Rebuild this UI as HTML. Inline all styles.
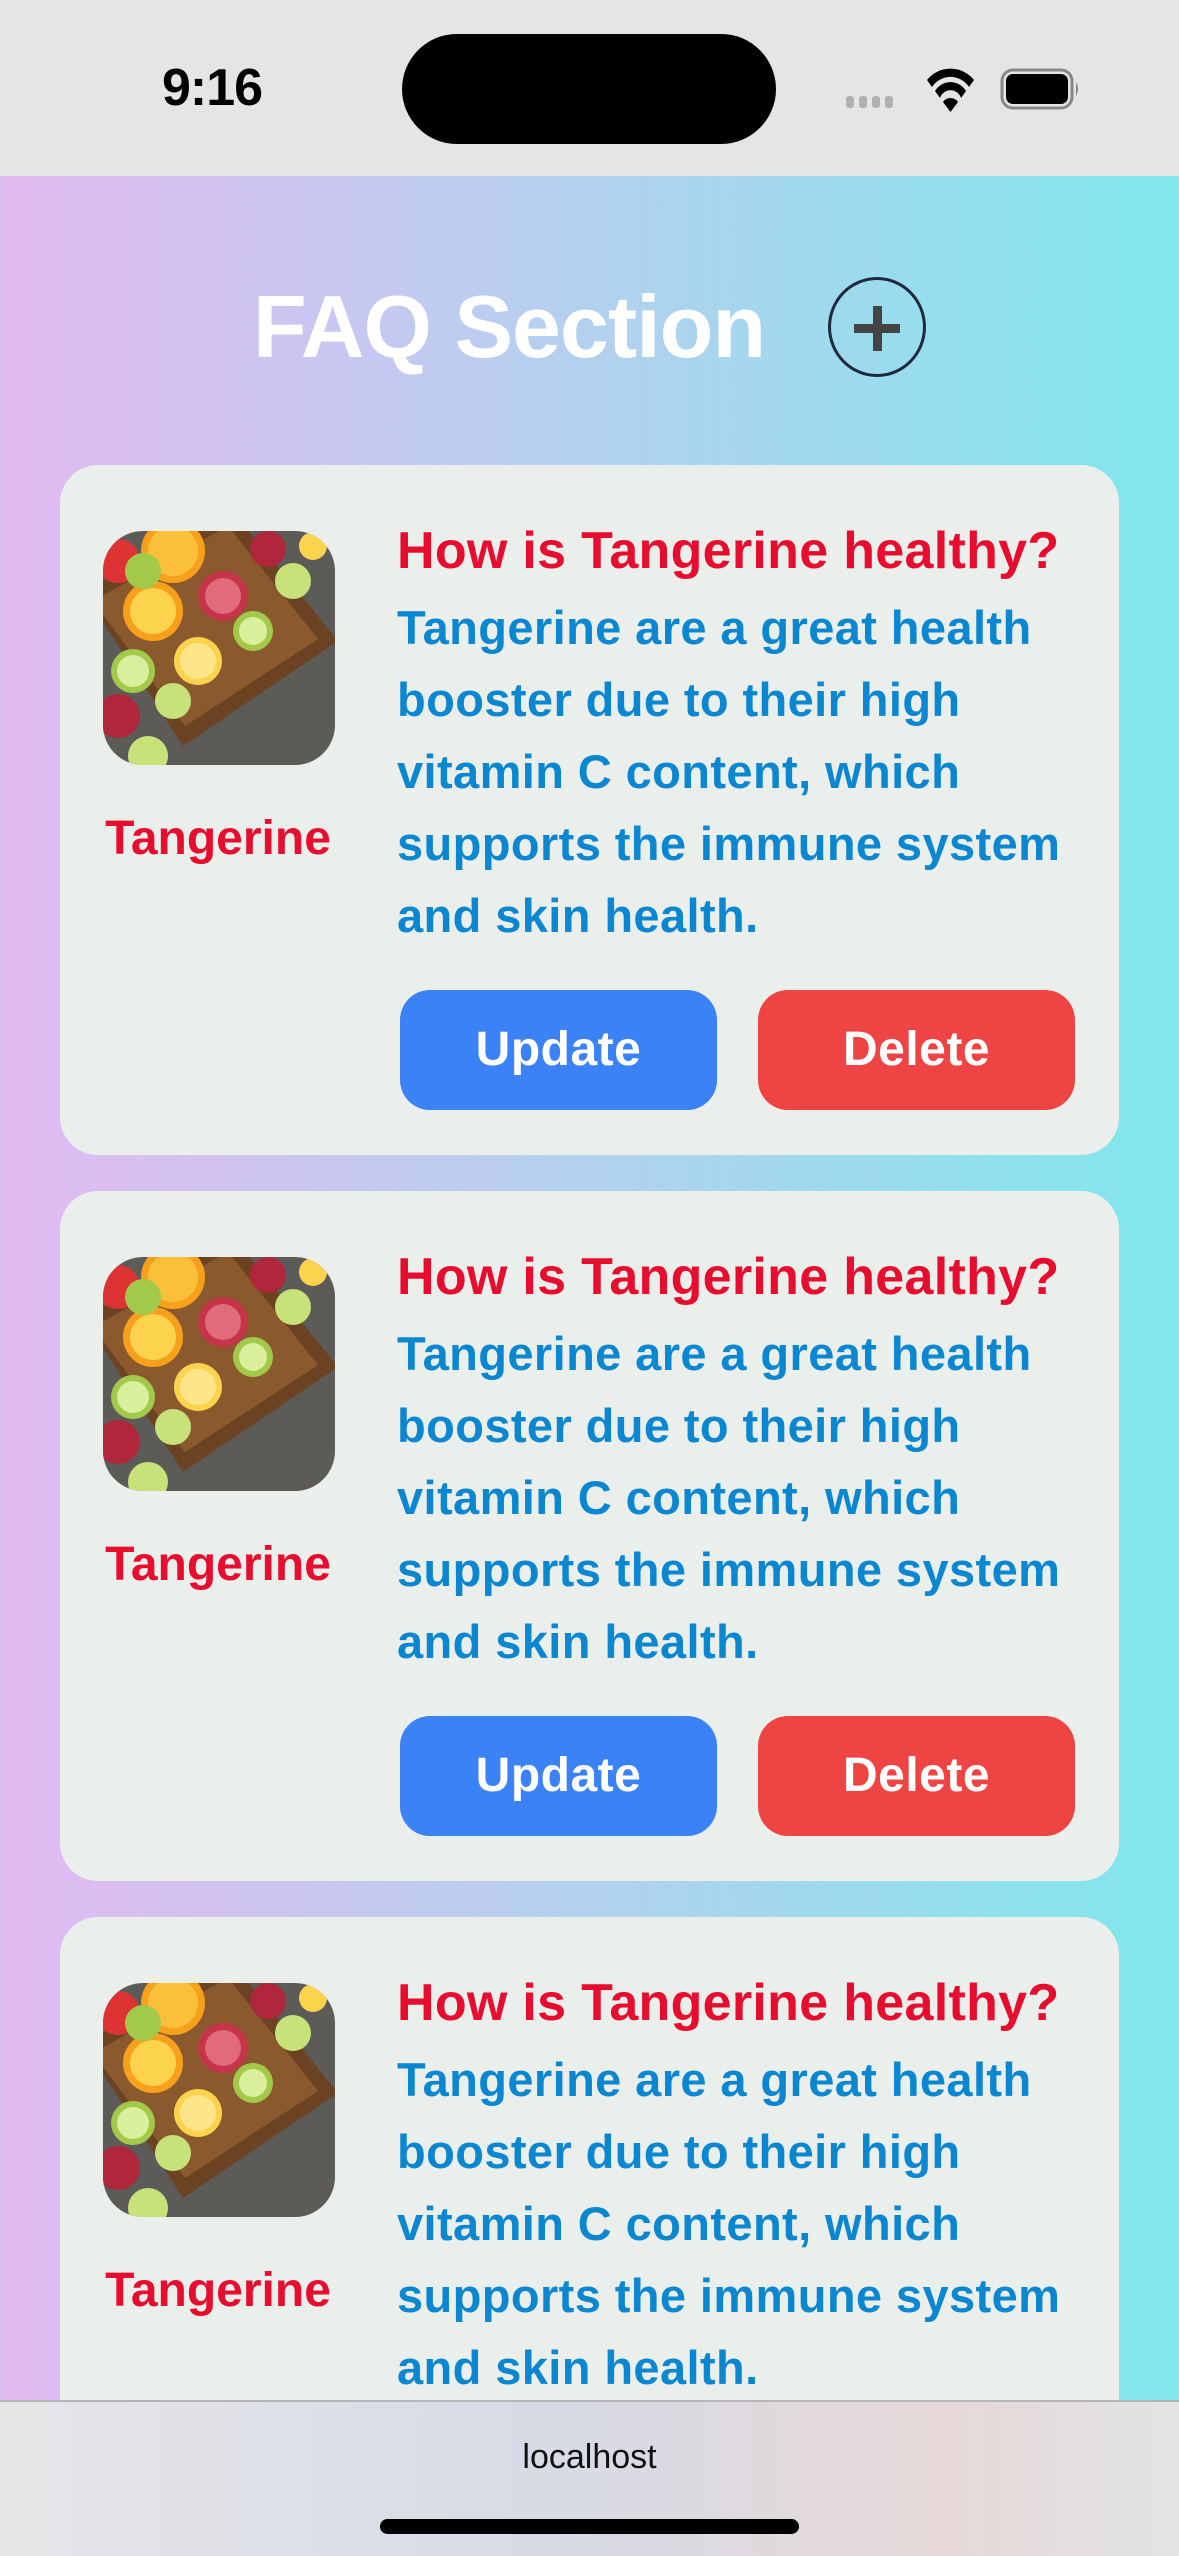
<!DOCTYPE html>
<html><head><meta charset="utf-8"><style>
*{margin:0;padding:0;box-sizing:border-box}
html,body{width:1179px;height:2556px;overflow:hidden}
body{position:relative;font-family:"Liberation Sans",Arial,sans-serif;background:linear-gradient(to right,#e2baf2 0%,#c6c8f1 30%,#a9d5ee 60%,#80e7ec 100%)}
.status{position:absolute;left:0;top:0;width:1179px;height:176px;background:#e5e5e5}
.time{position:absolute;left:162px;top:58px;font-size:52px;font-weight:bold;letter-spacing:-1px}
.island{position:absolute;left:402px;top:34px;width:374px;height:110px;border-radius:55px;background:#000}
.title{position:absolute;left:253px;top:276px;font-size:88px;font-weight:bold;color:#fff;white-space:nowrap;letter-spacing:-1px}
.plus{position:absolute;left:828px;top:277px;width:98px;height:100px;border:3px solid #1e293b;border-radius:50%}
.plus:before{content:"";position:absolute;left:23px;top:44px;width:46px;height:9px;background:#444}
.plus:after{content:"";position:absolute;left:42px;top:26px;width:9px;height:45px;background:#444}
.card{position:absolute;left:60px;width:1059px;height:690px;border-radius:38px;background:#ebefec;overflow:hidden}
.img{position:absolute;left:43px;top:66px;width:232px;height:234px;border-radius:40px;overflow:hidden}
.lab{position:absolute;left:0;width:316px;top:346px;text-align:center;font-size:48px;font-weight:bold;color:#e60d2e}
.q{position:absolute;left:337px;top:55px;line-height:62px;font-size:52px;font-weight:bold;color:#e60d2e;white-space:nowrap;letter-spacing:0.3px}
.a{position:absolute;left:337px;top:127px;width:720px;line-height:72px;font-size:47px;font-weight:bold;color:#0a87d0;letter-spacing:0.4px;white-space:nowrap}
.btn{position:absolute;top:525px;height:120px;width:317px;border-radius:30px;color:#fff;font-size:48px;font-weight:bold;text-align:center;line-height:120px;letter-spacing:0.5px}
.up{left:340px;background:#3b82f6}
.del{left:698px;background:#ef4444}
.bar{position:absolute;left:0;top:2400px;width:1179px;height:156px;border-top:2px solid #b5b5b8;background:linear-gradient(to right,#e6e6e8,#d6dbe6 45%,#e6d8d8 80%,#e2e4e4)}
.url{position:absolute;left:0;width:1179px;top:36px;text-align:center;font-size:34px;color:#111}
.home{position:absolute;left:380px;top:117px;width:419px;height:15px;border-radius:8px;background:#000}
</style></head><body>
<div class="status">
<div class="time">9:16</div>
<div class="island"></div>
<svg style="position:absolute;left:840px;top:60px" width="250" height="60" viewBox="0 0 250 60">
<g fill="#b0b0b0"><rect x="6" y="36" width="8" height="12" rx="3"/><rect x="19" y="36" width="8" height="12" rx="3"/><rect x="32" y="36" width="8" height="12" rx="3"/><rect x="45" y="36" width="8" height="12" rx="3"/></g>
<path d="M87 20 A30 30 0 0 1 134 20 L129 27 A22 22 0 0 0 92 27Z" fill="#000"/>
<path d="M95 31 A18 18 0 0 1 126 31 L121 38 A11 11 0 0 0 100 38Z" fill="#000"/>
<path d="M103 42 A9 9 0 0 1 118 42 L110.5 52Z" fill="#000"/>
<rect x="162" y="10" width="70" height="38" rx="11" fill="none" stroke="#888" stroke-width="3"/>
<rect x="166" y="14" width="62" height="30" rx="7" fill="#000"/>
<path d="M236 22 q4 7 0 14z" fill="#888"/>
</svg>
</div>
<div class="title">FAQ Section</div>
<div class="plus"></div>

<svg width="0" height="0" style="position:absolute"><defs>
<g id="fr">
<rect width="232" height="234" fill="#5d5b58"/>
<path d="M-20 60 L130 -20 L235 110 L80 215Z" fill="#6b4323"/>
<path d="M-10 70 L125 -5 L215 108 L82 195Z" fill="#8a5a2e"/>
<circle cx="70" cy="20" r="32" fill="#f7a01c"/><circle cx="70" cy="20" r="25" fill="#fbbf3a"/>
<circle cx="50" cy="80" r="30" fill="#f7a01c"/><circle cx="50" cy="80" r="23" fill="#fcd34d"/>
<circle cx="120" cy="65" r="25" fill="#c6344a"/><circle cx="120" cy="65" r="18" fill="#e06b7a"/>
<circle cx="95" cy="130" r="24" fill="#fcd34d"/><circle cx="95" cy="130" r="18" fill="#fde68a"/>
<circle cx="30" cy="140" r="22" fill="#a3c94a"/><circle cx="30" cy="140" r="16" fill="#d9ef9e"/>
<circle cx="150" cy="100" r="20" fill="#a3c94a"/><circle cx="150" cy="100" r="14" fill="#d9ef9e"/>
<circle cx="15" cy="30" r="22" fill="#d33"/><circle cx="40" cy="40" r="18" fill="#a3c94a"/>
<circle cx="15" cy="185" r="22" fill="#b0263a"/><circle cx="45" cy="225" r="20" fill="#c8e27a"/>
<circle cx="165" cy="18" r="18" fill="#b0263a"/><circle cx="210" cy="15" r="14" fill="#fcd34d"/>
<circle cx="190" cy="50" r="18" fill="#c8e27a"/><circle cx="70" cy="170" r="18" fill="#c8e27a"/>
</g></defs></svg>

<div class="card" style="top:465px">
<svg class="img" viewBox="0 0 232 234"><use href="#fr"/></svg>
<div class="lab">Tangerine</div>
<div class="q">How is Tangerine healthy?</div>
<div class="a">Tangerine are a great health<br>booster due to their high<br>vitamin C content, which<br>supports the immune system<br>and skin health.</div>
<div class="btn up">Update</div><div class="btn del">Delete</div>
</div>
<div class="card" style="top:1191px">
<svg class="img" viewBox="0 0 232 234"><use href="#fr"/></svg>
<div class="lab">Tangerine</div>
<div class="q">How is Tangerine healthy?</div>
<div class="a">Tangerine are a great health<br>booster due to their high<br>vitamin C content, which<br>supports the immune system<br>and skin health.</div>
<div class="btn up">Update</div><div class="btn del">Delete</div>
</div>
<div class="card" style="top:1917px">
<svg class="img" viewBox="0 0 232 234"><use href="#fr"/></svg>
<div class="lab">Tangerine</div>
<div class="q">How is Tangerine healthy?</div>
<div class="a">Tangerine are a great health<br>booster due to their high<br>vitamin C content, which<br>supports the immune system<br>and skin health.</div>
<div class="btn up">Update</div><div class="btn del">Delete</div>
</div>

<div class="bar"><div class="url">localhost</div><div class="home"></div></div>
</body></html>
